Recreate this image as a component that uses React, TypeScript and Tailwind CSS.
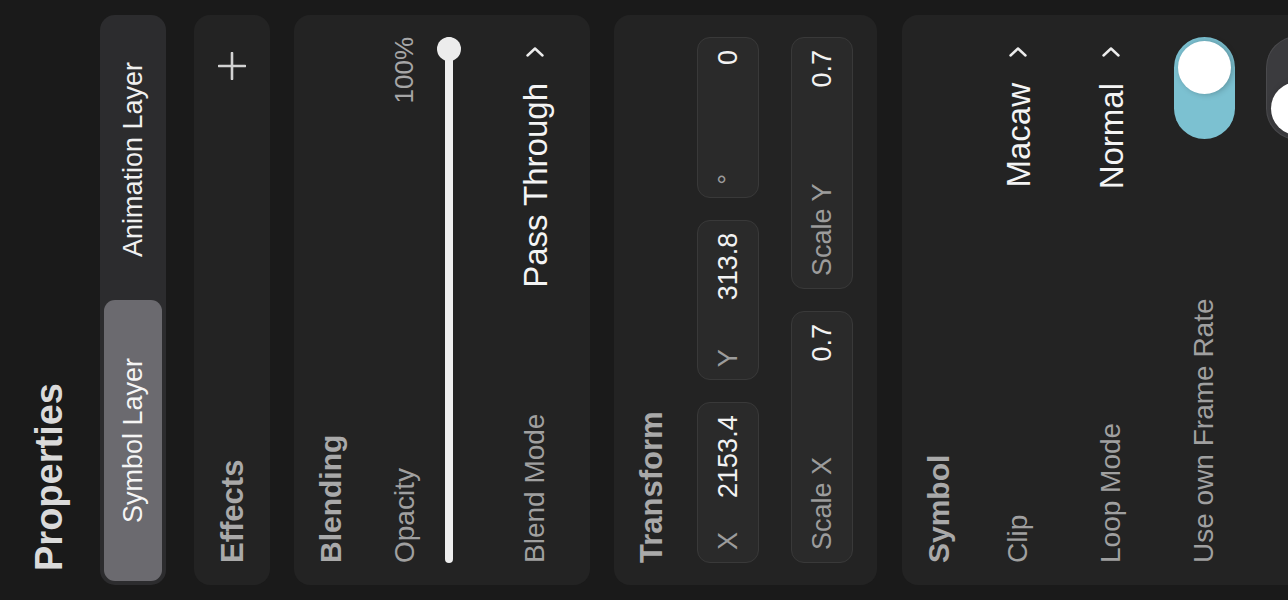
import clsx from 'clsx'

// Properties panel (portrait layout, drawn turned a quarter turn to the left)

function Chevron() {
  return (
    <svg width="10" height="18" viewBox="0 0 10 18" fill="none" className="shrink-0">
      <path d="M1.5 1.5L8.5 9L1.5 16.5" stroke="#ececec" strokeWidth="2.4" strokeLinecap="round" strokeLinejoin="round" />
    </svg>
  )
}

function Select({ label, value }: { label: string; value: string }) {
  return (
    <div className="flex h-[62px] items-center justify-between">
      <span className="text-[28px] leading-none text-[#a0a0a0]">{label}</span>
      <span className="mr-[10px] flex items-center gap-[26px]">
        <span className="text-[33px] leading-none text-[#f4f4f4]">{value}</span>
        <Chevron />
      </span>
    </div>
  )
}

function Field({ label, value }: { label: string; value: string }) {
  return (
    <div className="flex h-[62px] items-center justify-between rounded-[13px] border border-[#393939] bg-[#2a2a2a] px-[12px]">
      <span className="text-[27px] leading-none text-[#9c9c9c]">{label}</span>
      <span className="text-[27px] leading-none text-[#f2f2f2]">{value}</span>
    </div>
  )
}

function Toggle({ on }: { on: boolean }) {
  return (
    <div
      className={clsx(
        'flex h-[61px] w-[102px] shrink-0 items-center rounded-full px-[4px]',
        on ? 'justify-end bg-[#7cc1d1]' : 'justify-start bg-[#3b3b3e] ring-1 ring-[#4a4a4d]'
      )}
    >
      <div className="h-[53px] w-[53px] rounded-full bg-white shadow-[0_2px_6px_rgba(0,0,0,0.25)]" />
    </div>
  )
}

function Card({ children, className }: { children: React.ReactNode; className?: string }) {
  return <div className={clsx('rounded-[16px] bg-[#232323] px-[22px]', className)}>{children}</div>
}

export default function App() {
  return (
    <div className="relative h-[600px] w-[1288px] overflow-hidden bg-[#1a1a1a] font-['Liberation_Sans',Arial,sans-serif]">
      <div className="absolute left-0 top-0 h-[1288px] w-[600px] origin-top-left translate-y-[600px] -rotate-90 px-[15px] pt-[30px]">
        <h1 className="pl-[14px] text-[38px] font-bold leading-none text-[#dadada]">Properties</h1>

        {/* layer tabs */}
        <div className="mt-[32px] flex h-[66px] rounded-[15px] bg-[#2c2c2e] p-[4px]">
          <div className="flex flex-1 items-center justify-center rounded-[11px] bg-[#6b6a6f] text-[27px] leading-none text-[#f5f5f5]">
            Symbol Layer
          </div>
          <div className="flex flex-1 items-center justify-center text-[27px] leading-none text-[#f0f0f0]">
            Animation Layer
          </div>
        </div>

        {/* Effects */}
        <Card className="mt-[28px] flex h-[76px] items-center justify-between">
          <h2 className="text-[31px] font-bold leading-none text-[#a9a9a9]">Effects</h2>
          <svg width="28" height="28" viewBox="0 0 28 28" className="mr-[15px]">
            <path d="M14 1V27M1 14H27" stroke="#d2d2d2" strokeWidth="2.6" strokeLinecap="round" />
          </svg>
        </Card>

        {/* Blending */}
        <Card className="mt-[24px] h-[296px] pt-[22px]">
          <h2 className="text-[30px] font-bold leading-none text-[#a9a9a9]">Blending</h2>
          <div className="mt-[45px] flex items-start justify-between">
            <span className="text-[28px] leading-none text-[#a0a0a0]">Opacity</span>
            <span className="text-[26px] leading-none text-[#a6a6a6]">100%</span>
          </div>
          <div className="relative mt-[18px] flex h-[24px] items-center">
            <div className="h-[8px] w-full rounded-full bg-[#eeeeee]" />
            <div className="absolute right-0 h-[24px] w-[24px] rounded-full bg-[#ececec]" />
          </div>
          <div className="mt-[43px]">
            <Select label="Blend Mode" value="Pass Through" />
          </div>
        </Card>

        {/* Transform */}
        <Card className="mt-[24px] pb-[24px] pt-[22px]">
          <h2 className="text-[31px] font-bold leading-none text-[#a9a9a9]">Transform</h2>
          <div className="mt-[30px] grid grid-cols-3 gap-[22px]">
            <Field label="X" value="2153.4" />
            <Field label="Y" value="313.8" />
            <Field label="°" value="0" />
          </div>
          <div className="mt-[32px] grid grid-cols-2 gap-[22px]">
            <Field label="Scale X" value="0.7" />
            <Field label="Scale Y" value="0.7" />
          </div>
        </Card>

        {/* Symbol */}
        <Card className="mt-[25px] pb-[24px] pt-[22px]">
          <h2 className="text-[30px] font-bold leading-none text-[#a9a9a9]">Symbol</h2>
          <div className="mt-[33px] flex flex-col gap-[31px]">
            <Select label="Clip" value="Macaw" />
            <Select label="Loop Mode" value="Normal" />
            <div className="flex h-[62px] items-center justify-between">
              <span className="text-[28px] leading-none text-[#a0a0a0]">Use own Frame Rate</span>
              <Toggle on />
            </div>
            <div className="flex h-[62px] items-center justify-end">
              <Toggle on={false} />
            </div>
          </div>
        </Card>
      </div>
    </div>
  )
}
